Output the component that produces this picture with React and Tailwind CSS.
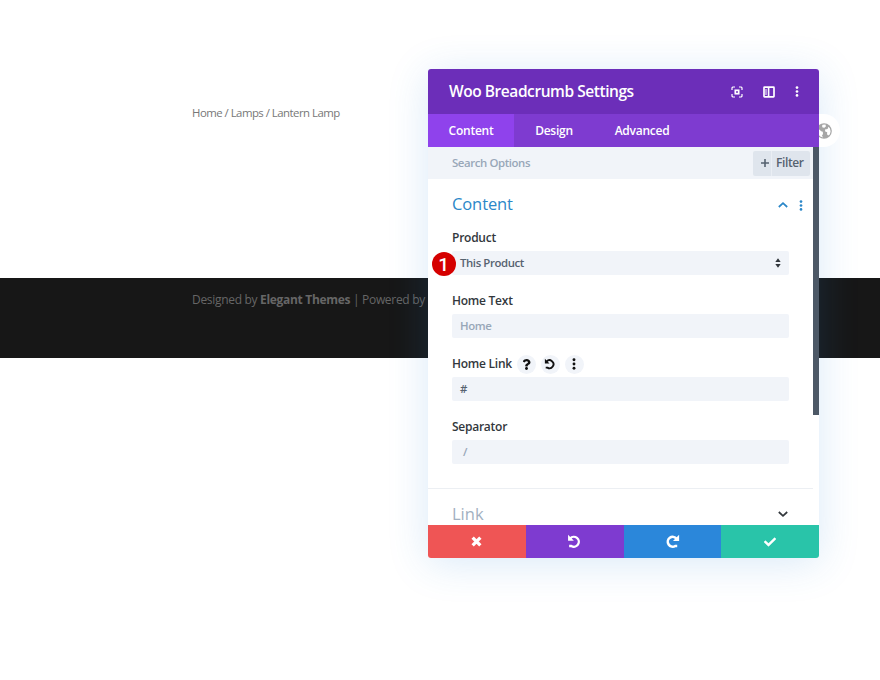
import React from 'react';
import { FaCheck, FaQuestion } from 'react-icons/fa';

const UndoIcon = ({ className = '' }) => (
  <svg viewBox="0 0 14 14" className={className} fill="none" stroke="currentColor" strokeWidth="2.2">
    <path d="M3 4.2A4.6 4.6 0 1 1 4 11.2H2" />
    <path d="M1 0.8v5.6h5.4z" fill="currentColor" stroke="none" />
  </svg>
);

const RedoIcon = ({ className = '' }) => (
  <svg viewBox="0 0 14 14" className={className} fill="none" stroke="currentColor" strokeWidth="2.4">
    <path d="M10.8 4.4A4.6 4.6 0 1 0 9.6 11.2H11.4" />
    <path d="M13.2 0.8v5.8H7.4z" fill="currentColor" stroke="none" />
  </svg>
);

const CrossIcon = ({ className = '' }) => (
  <svg viewBox="0 0 12 12" className={className} stroke="currentColor" strokeWidth="3.6">
    <path d="M1.8 1.8l8.4 8.4M10.2 1.8l-8.4 8.4" />
  </svg>
);

const DotsIcon = ({ className = '' }) => (
  <svg viewBox="0 0 4 12" className={className} fill="currentColor">
    <circle cx="2" cy="1.7" r="1.45" />
    <circle cx="2" cy="6" r="1.45" />
    <circle cx="2" cy="10.3" r="1.45" />
  </svg>
);

const FocusIcon = ({ className = '' }) => (
  <svg viewBox="0 0 12 12" className={className} fill="none" stroke="currentColor" strokeWidth="1.2">
    <path d="M1 4V1.8L1.8 1H4M8 1h2.2l0.8 0.8V4M11 8v2.2l-0.8 0.8H8M4 11H1.8L1 10.2V8" />
    <rect x="4.3" y="4.3" width="3.4" height="3.4" strokeWidth="1.7" />
  </svg>
);

const PanelIcon = ({ className = '' }) => (
  <svg viewBox="0 0 12 12" className={className} fill="none" stroke="currentColor">
    <rect x="1" y="1.2" width="10" height="9.6" rx="0.5" strokeWidth="1.7" />
    <path d="M5.6 1.5v9" strokeWidth="1.6" />
    <path d="M2 4h2M2 6h2M2 8h2" strokeWidth="1.1" />
  </svg>
);

const ChevronIcon = ({ className = '' }) => (
  <svg viewBox="0 0 10 6" className={className} fill="none" stroke="currentColor" strokeWidth="1.7">
    <path d="M0.8 5L5 1.2L9.2 5" />
  </svg>
);

const SortIcon = ({ className = '' }) => (
  <svg viewBox="0 0 6 10" className={className} fill="currentColor">
    <path d="M3 0.2L5.7 4H0.3zM3 9.8L0.3 6h5.4z" />
  </svg>
);

const GlobeIcon = ({ className = '' }) => (
  <svg viewBox="0 0 16 16" className={className}>
    <circle cx="8" cy="8" r="7.8" fill="#a6a6a6" />
    <path
      d="M2 5.2l3.2 3 1.6 0.6 0.2 2.2-1 1.6 1 1.8C4 14 2 12 1.6 9zM6.6 1.8l2.8-0.4 0.6 1.8-1.6 1.6-1.8-0.4-0.6-1.4zM9 6.6l2.6-0.6 0.8-2.2 1.6 1.8 0.6 3-0.8 2.8-1.6 1.2-1.2-1.4 0.2-2-2-0.8z"
      fill="#fff"
    />
  </svg>
);

const tabs = [
  { name: 'Content', width: 'w-[86px]' },
  { name: 'Design', width: 'w-[80px]' },
  { name: 'Advanced', width: 'w-[96px]' }
];

const fields = [
  { label: 'Product', value: 'This Product', type: 'select', marker: '1' },
  { label: 'Home Text', placeholder: 'Home' },
  { label: 'Home Link', value: '#', tools: true },
  { label: 'Separator', placeholder: '/', indent: true }
];

const actions = [
  { name: 'Discard', color: 'bg-[#ef5555]', icon: <CrossIcon className="h-[11px] w-[11px]" /> },
  { name: 'Undo', color: 'bg-[#7e3bd0]', icon: <UndoIcon className="h-[15px] w-[15px]" /> },
  { name: 'Redo', color: 'bg-[#2b87da]', icon: <RedoIcon className="h-[15px] w-[15px]" /> },
  { name: 'Save', color: 'bg-[#29c4a9]', icon: <FaCheck className="h-[12px] w-[12px]" /> }
];

const Field = ({ field }) => (
  <div className="h-[63px]">
    <div className="flex h-[22px] items-center text-[12px] font-semibold tracking-[-0.25px] text-[#32373c]">
      <span>{field.label}</span>
      {field.tools && (
        <div className="ml-[5px] flex gap-[5px] text-[#111]">
          <button className="flex h-[19px] w-[19px] items-center justify-center rounded-full bg-[#f1f4f9]">
            <FaQuestion className="h-[11px] w-[11px]" />
          </button>
          <button className="flex h-[19px] w-[19px] items-center justify-center rounded-full bg-[#f1f4f9]">
            <UndoIcon className="h-[12px] w-[12px]" />
          </button>
          <button className="flex h-[19px] w-[19px] items-center justify-center rounded-full bg-[#f1f4f9]">
            <DotsIcon className="h-[12px] w-[4px]" />
          </button>
        </div>
      )}
    </div>
    <div className="relative mt-[2px] flex h-6 w-[337px] items-center justify-between rounded-[2px] bg-[#f1f4f9] px-2 text-[11.4px] font-semibold tracking-[-0.4px]">
      {field.value ? (
        <span className="text-[#566270]">{field.value}</span>
      ) : (
        <span className={field.indent ? 'pl-[3px] text-[#98a7b8]' : 'text-[#98a7b8]'}>{field.placeholder}</span>
      )}
      {field.type === 'select' && <SortIcon className="h-[10px] w-[6px] text-[#32373c]" />}
      {field.marker && (
        <span className="absolute -left-5 top-[1px] flex h-6 w-6 items-center justify-center rounded-full bg-[#d50000] pr-px font-[Roboto,sans-serif] text-[19px] leading-none font-medium text-white">
          {field.marker}
        </span>
      )}
    </div>
  </div>
);

const SettingsModal = () => (
  <div className="absolute left-[428px] top-[69px] h-[489px] w-[391px] rounded-[3px] shadow-[0_5px_40px_rgba(43,135,218,0.18)]">
    <div className="flex h-full flex-col overflow-hidden rounded-[3px] bg-white">
      {/* Title bar */}
      <div className="flex h-[45px] shrink-0 items-center justify-between bg-[#6c2eb9] pl-[21px] pr-5 text-white">
        <h2 className="text-[15.5px] font-semibold tracking-[-0.44px]">Woo Breadcrumb Settings</h2>
        <div className="flex items-center">
          <FocusIcon className="mr-[20px] h-[12px] w-[12px]" />
          <PanelIcon className="mr-[20px] h-[12px] w-[12px]" />
          <DotsIcon className="h-[11px] w-[4px]" />
        </div>
      </div>

      {/* Tabs */}
      <div className="flex h-[33px] shrink-0 bg-[#7e3bd0] text-[12px] font-semibold tracking-[-0.25px] text-white">
        {tabs.map((tab) => (
          <button
            key={tab.name}
            className={`${tab.width} ${tab.name === 'Content' ? 'bg-[#8f42ec]' : ''}`}
          >
            {tab.name}
          </button>
        ))}
      </div>

      <div className="flex min-h-0 flex-1">
        <div className="flex w-[385px] flex-col overflow-hidden">
          {/* Search and filter */}
          <div className="flex h-8 shrink-0 items-center justify-between bg-[#f1f4f9] pl-6 pr-[3px] text-[11.4px] font-semibold tracking-[-0.4px]">
            <span className="text-[#98a7b8]">Search Options</span>
            <button className="flex h-[25px] w-[57px] items-center rounded-[2px] bg-[#dfe5ed] text-[#566270]">
              <span className="flex h-full w-[19px] items-center justify-end border-r border-[#eaeef4] pr-[2px]">
                <svg viewBox="0 0 8 8" className="h-2 w-2" stroke="currentColor" strokeWidth="1.6">
                  <path d="M4 0v8M0 4h8" />
                </svg>
              </span>
              <span className="pl-[4px] text-[12px]">Filter</span>
            </button>
          </div>

          {/* Content group */}
          <div className="h-[310px] shrink-0 border-b border-[#eceff3] pl-6">
            <div className="flex h-12 items-center justify-between pb-px pr-[10px] pt-[4px] text-[#2b87c8]">
              <h3 className="text-[16.5px] tracking-[-0.1px]">Content</h3>
              <div className="flex items-center pt-px">
                <ChevronIcon className="mr-[11px] h-[6px] w-[10px]" />
                <DotsIcon className="h-[11px] w-[4px]" />
              </div>
            </div>
            {fields.map((field) => (
              <Field key={field.label} field={field} />
            ))}
          </div>

          {/* Link group */}
          <div className="flex h-[50px] shrink-0 items-center justify-between pl-6 pr-[25px]">
            <h3 className="text-[16.5px] text-[#a2b0c1]">Link</h3>
            <ChevronIcon className="h-[6px] w-[10px] rotate-180 text-[#32373c]" />
          </div>
        </div>
        <div className="h-[268px] w-[6px] bg-[#4c5866]" />
      </div>

      {/* Footer actions */}
      <div className="grid h-[33px] shrink-0 grid-cols-4">
        {actions.map((action) => (
          <button
            key={action.name}
            aria-label={action.name}
            className={`flex items-center justify-center text-white ${action.color}`}
          >
            {action.icon}
          </button>
        ))}
      </div>
    </div>
  </div>
);

const App = () => (
  <div className="relative h-[680px] w-[880px] overflow-hidden bg-white font-['Open_Sans',sans-serif]">
    <main className="h-[278px] pl-48 pt-[104px]">
      <p className="text-[11.4px] leading-[18px] tracking-[-0.52px] text-[#777]">Home / Lamps / Lantern Lamp</p>
    </main>
    <footer className="h-[80px] bg-[#171717] pl-48 pt-[13px] text-[12px] leading-[18px] tracking-[-0.31px] text-[#666]">
      Designed by <strong>Elegant Themes</strong> | Powered by
    </footer>

    <SettingsModal />
    {/* Portability button sticking out from the side of the modal */}
    <div className="absolute left-[819px] top-[114px] h-[33px] w-[21px] overflow-hidden rounded-r-full bg-white">
      <div className="-ml-[3px] flex h-full items-center">
        <GlobeIcon className="h-4 w-4" />
      </div>
    </div>
  </div>
);

export default App;
